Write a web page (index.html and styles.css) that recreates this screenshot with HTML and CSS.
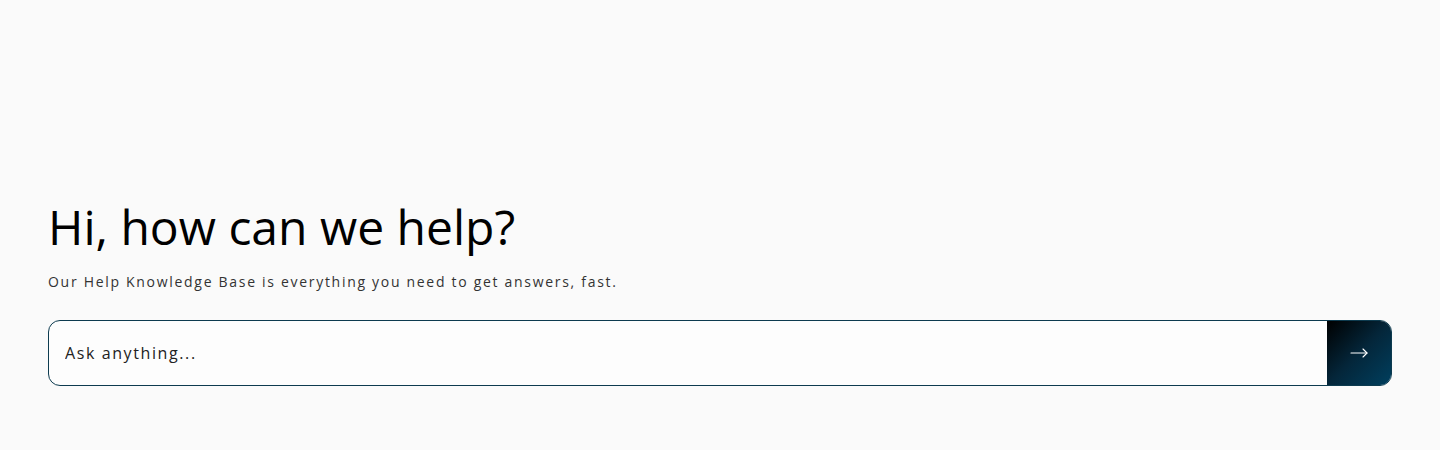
FILE: index.html
```html
<!DOCTYPE html>
<html>
  <head>
    <meta charset="UTF-8">
    <title>Help Center</title>
    <link rel="stylesheet" href="styles.css">
  </head>
  <body>
    <section class="hero">
      <h1>Hi, how can we help?</h1>
      <p class="hero-sub">Our Help Knowledge Base is everything you need to get answers, fast.</p>

      <form class="search">
        <input type="text" class="search-input" placeholder="Ask anything...">
        <button type="submit" class="search-btn" aria-label="Search">
          <svg width="20" height="20" viewBox="0 0 20 20" fill="none" stroke="#ffffff" stroke-width="1.1" stroke-linecap="round" stroke-linejoin="round">
            <path d="M2 10h16"/>
            <path d="M14 6l4 4-4 4"/>
          </svg>
        </button>
      </form>
    </section>
  </body>
</html>
```

FILE: styles.css
```css
:root {
  --bg-color: #fafafa;
  --text-color: #000000;
  --muted-color: #333333;
  --border-color: #0d3b4f;
}

body {
  margin: 0;
  font-family: 'Open Sans', 'Noto Sans', sans-serif;
  color: var(--text-color);
  background: var(--bg-color);
}

.hero {
  padding: 198px 48px 64px;
}

h1 {
  margin: 0;
  font-size: 48px;
  font-weight: 400;
  line-height: 58px;
}

.hero-sub {
  margin: 16px 0 0;
  font-size: 14px;
  line-height: 20px;
  letter-spacing: 1.7px;
  color: var(--muted-color);
}

.search {
  display: flex;
  margin-top: 28px;
  height: 66px;
  border: 1px solid var(--border-color);
  border-radius: 12px;
  background: #fdfdfd;
  overflow: hidden;
  box-sizing: border-box;
}

.search-input {
  flex: 1;
  border: none;
  outline: none;
  background: transparent;
  padding: 0 16px;
  font-family: inherit;
  font-size: 16px;
  letter-spacing: 1.6px;
  color: var(--text-color);
}

.search-input::placeholder {
  color: #222222;
}

.search-btn {
  width: 64px;
  border: none;
  cursor: pointer;
  display: flex;
  align-items: center;
  justify-content: center;
  background: linear-gradient(135deg, #000000 0%, #04263a 50%, #003f5e 100%);
}
```
